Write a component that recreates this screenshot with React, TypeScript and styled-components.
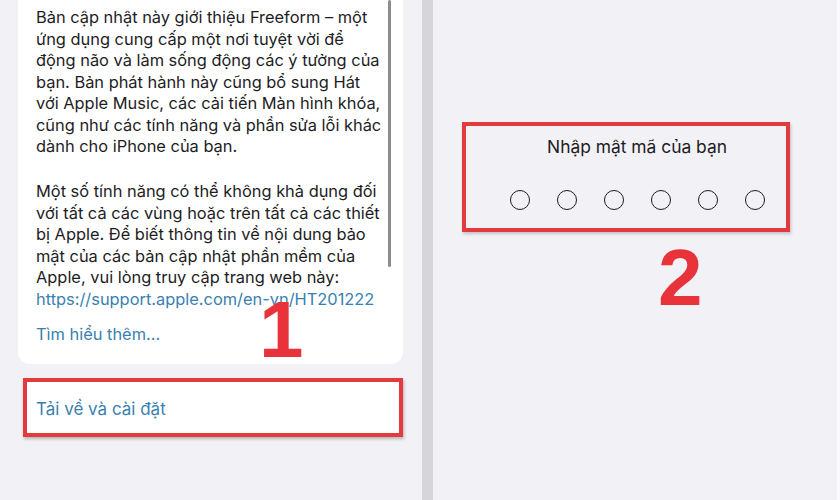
import React from 'react';
import styled, { createGlobalStyle } from 'styled-components';

const GlobalStyle = createGlobalStyle`
  html, body {
    margin: 0;
    padding: 0;
    background: #f2f2f6;
  }
  body {
    font-family: Inter, 'Noto Sans', sans-serif;
  }
`;

const paragraphOne = [
  'Bản cập nhật này giới thiệu Freeform – một',
  'ứng dụng cung cấp một nơi tuyệt vời để',
  'động não và làm sống động các ý tưởng của',
  'bạn. Bản phát hành này cũng bổ sung Hát',
  'với Apple Music, các cải tiến Màn hình khóa,',
  'cũng như các tính năng và phần sửa lỗi khác',
  'dành cho iPhone của bạn.',
];

const paragraphTwo = [
  'Một số tính năng có thể không khả dụng đối',
  'với tất cả các vùng hoặc trên tất cả các thiết',
  'bị Apple. Để biết thông tin về nội dung bảo',
  'mật của các bản cập nhật phần mềm của',
  'Apple, vui lòng truy cập trang web này:',
];

const App = () => (
  <>
    <GlobalStyle />
    <Screen>
      <UpdatePanel>
        <NotesCard>
          <ScrollIndicator />
          <Paragraph>
            {paragraphOne.map((line) => (
              <Line key={line}>{line}</Line>
            ))}
          </Paragraph>
          <Paragraph>
            {paragraphTwo.map((line) => (
              <Line key={line}>{line}</Line>
            ))}
            <Line $link>https://support.apple.com/en-vn/HT201222</Line>
          </Paragraph>
          <MoreLink>Tìm hiểu thêm...</MoreLink>
        </NotesCard>
        <InstallRow>Tải về và cài đặt</InstallRow>
        <StepNumber $left={259} $top={290}>
          1
        </StepNumber>
      </UpdatePanel>
      <Divider />
      <PasscodePanel>
        <PasscodeBox>
          <PasscodeTitle>Nhập mật mã của bạn</PasscodeTitle>
          <Dots>
            {[0, 1, 2, 3, 4, 5].map((i) => (
              <Dot key={i} />
            ))}
          </Dots>
        </PasscodeBox>
        <StepLabel>2</StepLabel>
      </PasscodePanel>
    </Screen>
  </>
);

export default App;

const Screen = styled.div`
  display: flex;
  width: 840px;
  height: 500px;
  overflow: hidden;
  background: #f2f2f6;
`;

const UpdatePanel = styled.div`
  position: relative;
  width: 422px;
  padding: 0 19px 0 18px;
  box-sizing: border-box;
  display: flex;
  flex-direction: column;
`;

const NotesCard = styled.div`
  position: relative;
  background: #ffffff;
  border-radius: 0 0 12px 12px;
  padding: 7px 18px 18px 18px;
`;

const ScrollIndicator = styled.div`
  position: absolute;
  top: 0;
  right: 12px;
  width: 3px;
  height: 267px;
  border-radius: 2px;
  background: #8c8c90;
`;

const Paragraph = styled.div`
  & + & {
    margin-top: 23.5px;
  }
`;

const Line = styled.div<{ $link?: boolean }>`
  font-size: 16.4px;
  line-height: 21.5px;
  white-space: nowrap;
  color: ${(p) => (p.$link ? '#3a7fb0' : '#1d1d1f')};
`;

const MoreLink = styled.div`
  margin-top: 14px;
  font-size: 16.4px;
  line-height: 21.5px;
  color: #3a7fb0;
`;

const InstallRow = styled.div`
  margin: 14px 0 0 5px;
  height: 59px;
  box-sizing: border-box;
  display: flex;
  align-items: center;
  padding: 3px 0 0 9px;
  background: #ffffff;
  border: 4px solid #e33a3e;
  box-shadow: 1px 2px 3px rgba(0, 0, 0, 0.25);
  font-size: 17px;
  color: #3a7fb0;
`;

const StepNumber = styled.div<{ $left: number; $top: number }>`
  position: absolute;
  left: ${(p) => p.$left}px;
  top: ${(p) => p.$top}px;
  font-family: 'Liberation Sans', Arial, sans-serif;
  font-weight: 700;
  font-size: 80px;
  line-height: 1;
  color: #e8333a;
`;

const Divider = styled.div`
  width: 11px;
  background: #d6d6d8;
`;

const PasscodePanel = styled.div`
  flex: 1;
  display: flex;
  flex-direction: column;
  align-items: flex-start;
  padding: 122px 0 0 29px;
  background: #f2f1f6;
  border-right: 3px solid #fbfbfd;
`;

const PasscodeBox = styled.div`
  width: 328px;
  height: 110px;
  box-sizing: border-box;
  border: 4px solid #e33a3e;
  box-shadow: 1px 2px 3px rgba(0, 0, 0, 0.2);
  padding: 10px 0 0 22px;
  display: flex;
  flex-direction: column;
  align-items: center;
`;

const PasscodeTitle = styled.div`
  font-size: 17.4px;
  line-height: 21px;
  color: #1d1d1f;
`;

const Dots = styled.div`
  display: flex;
  gap: 27px;
  margin-top: 33px;
`;

const Dot = styled.div`
  width: 20px;
  height: 20px;
  box-sizing: border-box;
  border-radius: 50%;
  border: 1.4px solid #1d1d1f;
`;

const StepLabel = styled.div`
  margin: 6px 0 0 196px;
  font-family: 'Liberation Sans', Arial, sans-serif;
  font-weight: 700;
  font-size: 80px;
  line-height: 1;
  color: #e8333a;
`;
